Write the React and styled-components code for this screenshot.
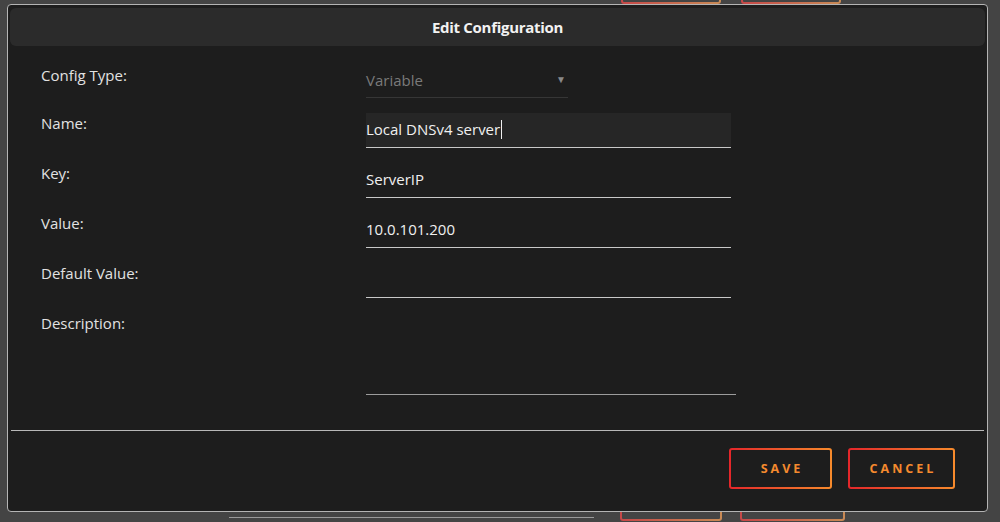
import React from 'react';
import styled, { createGlobalStyle } from 'styled-components';

const GlobalStyle = createGlobalStyle`
  html, body {
    margin: 0;
    padding: 0;
    background: #444444;
    font-family: "Open Sans", "Noto Sans", sans-serif;
    overflow: hidden;
  }
`;

const fields = [
  { label: 'Name:', value: 'Local DNSv4 server', focused: true },
  { label: 'Key:', value: 'ServerIP' },
  { label: 'Value:', value: '10.0.101.200' },
  { label: 'Default Value:', value: '' },
];

const Page = styled.div`
  width: 1000px;
  height: 522px;
  display: flex;
  flex-direction: column;
  justify-content: space-between;
  background: #444444;
`;

const StripTop = styled.div`
  height: 4px;
  display: flex;
  align-items: flex-end;
  gap: 20px;
  padding-left: 621px;
  overflow: hidden;
`;

const StripBottom = styled.div`
  height: 10px;
  display: flex;
  align-items: flex-start;
  padding-left: 229px;
  overflow: hidden;
`;

const GhostLine = styled.div`
  width: 365px;
  height: 1px;
  margin-top: 5px;
  margin-right: 26px;
  background: #9a9a9a;
  flex-shrink: 0;
`;

const GhostButton = styled.div`
  width: ${(p) => p.w}px;
  height: 40px;
  box-sizing: border-box;
  margin-top: ${(p) => p.mt || 0}px;
  margin-right: ${(p) => p.mr || 0}px;
  border: 2px solid transparent;
  border-radius: 3px;
  background: linear-gradient(#444, #444) padding-box,
    linear-gradient(90deg, #c64848, #c88a55) border-box;
  flex-shrink: 0;
`;

const Modal = styled.div`
  position: fixed;
  left: 7px;
  top: 4px;
  width: 981px;
  height: 508px;
  border: 1px solid #b4b4b4;
  border-radius: 4px;
  background: #1d1d1d;
  display: flex;
  flex-direction: column;
  padding: 3px 2px 0 2px;
  box-sizing: border-box;
`;

const Header = styled.div`
  height: 38px;
  border-radius: 6px;
  background: #2b2b2b;
  display: flex;
  align-items: center;
  justify-content: center;
  color: #f2f2f2;
  font-size: 15px;
  font-weight: 700;
  letter-spacing: -0.3px;
`;

const Form = styled.div`
  display: grid;
  grid-template-columns: 325px 1fr;
  row-gap: 15px;
  padding: 17px 0 0 31px;
`;

const Label = styled.div`
  color: #e2e2e2;
  font-size: 15px;
  line-height: 18px;
  padding-top: ${(p) => p.pt ?? 1}px;
`;

const Select = styled.div`
  width: 202px;
  height: 35px;
  box-sizing: border-box;
  border-bottom: 1px solid #363636;
  display: flex;
  align-items: center;
  justify-content: space-between;
  color: #7a7a7a;
  font-size: 15px;
  padding-right: 2px;
`;

const Arrow = styled.span`
  font-size: 10px;
  color: #8a8a8a;
  margin-top: -2px;
`;

const TextField = styled.div`
  width: 365px;
  height: 35px;
  box-sizing: border-box;
  border-bottom: 1px solid #c8c8c8;
  background: ${(p) => (p.focused ? '#262626' : 'transparent')};
  display: flex;
  align-items: center;
  color: #f0f0f0;
  font-size: 15px;
  padding-bottom: 2px;
`;

const Caret = styled.span`
  display: inline-block;
  width: 1px;
  height: 19px;
  margin-left: 1px;
  background: #f0f0f0;
`;

const TextArea = styled.div`
  width: 370px;
  height: 82px;
  box-sizing: border-box;
  border-bottom: 1px solid #9c9c9c;
`;

const Divider = styled.div`
  height: 1px;
  background: #b8b8b8;
  margin: 35px 1px 0 1px;
`;

const Footer = styled.div`
  display: flex;
  justify-content: flex-end;
  gap: 16px;
  padding: 17px 30px 0 0;
`;

const Button = styled.button`
  width: ${(p) => p.w}px;
  height: 41px;
  box-sizing: border-box;
  border: 2px solid transparent;
  border-radius: 3px;
  background: linear-gradient(#1d1d1d, #1d1d1d) padding-box,
    linear-gradient(90deg, #e4262a, #f78b2c) border-box;
  color: #f58a2e;
  font-family: "Open Sans", "Noto Sans", sans-serif;
  font-size: 12.5px;
  font-weight: 700;
  letter-spacing: 3px;
  padding: 0 0 0 3px;
  cursor: pointer;
`;

export default function App() {
  return (
    <>
      <GlobalStyle />
      <Page>
        <StripTop>
          <GhostButton w={100} />
          <GhostButton w={100} />
        </StripTop>
        <StripBottom>
          <GhostLine />
          <GhostButton w={102} mr={18} mt={-31} />
          <GhostButton w={105} mt={-31} />
        </StripBottom>
      </Page>
      <Modal>
        <Header>Edit Configuration</Header>
        <Form>
          <Label pt={3}>Config Type:</Label>
          <Select>
            Variable
            <Arrow>▼</Arrow>
          </Select>
          {fields.map((f) => (
            <React.Fragment key={f.label}>
              <Label>{f.label}</Label>
              <TextField focused={f.focused}>
                {f.value}
                {f.focused && <Caret />}
              </TextField>
            </React.Fragment>
          ))}
          <Label>Description:</Label>
          <TextArea />
        </Form>
        <Divider />
        <Footer>
          <Button w={103}>SAVE</Button>
          <Button w={107}>CANCEL</Button>
        </Footer>
      </Modal>
    </>
  );
}
